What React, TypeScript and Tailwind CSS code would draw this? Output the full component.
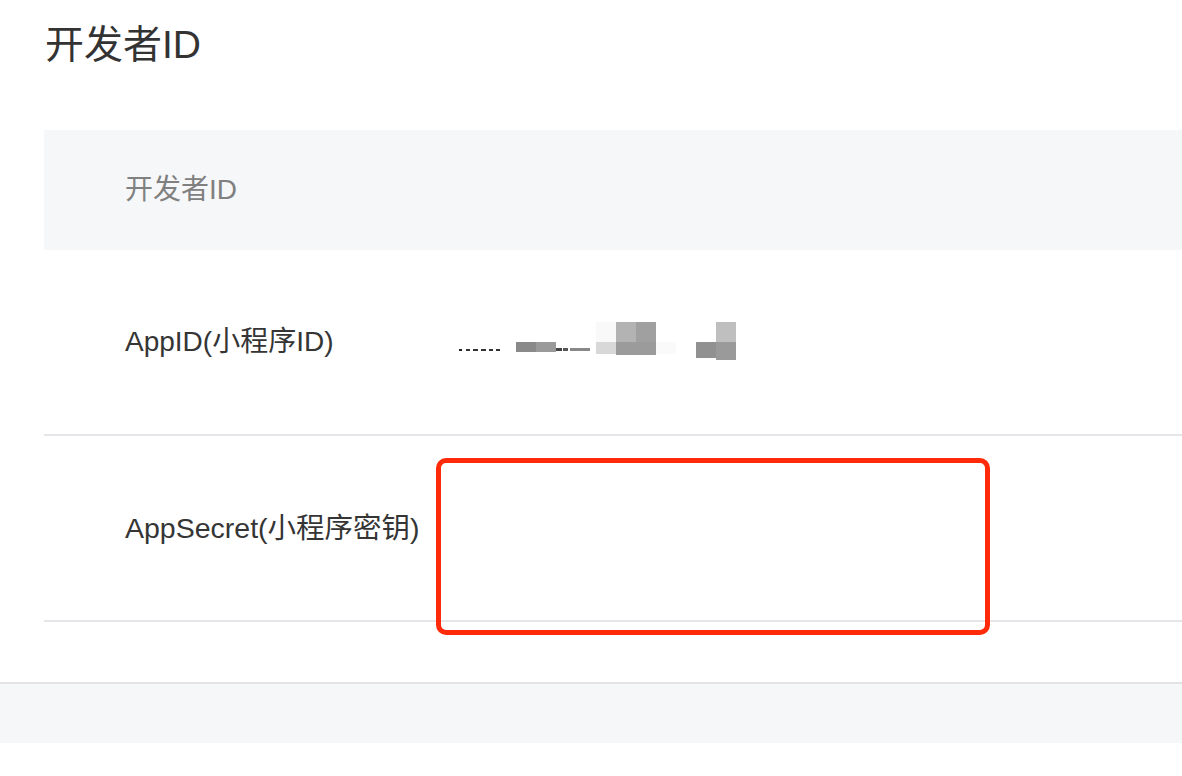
import React from "react";

const font = { fontFamily: '"Liberation Sans", "Noto Sans CJK SC", sans-serif' };

function Mosaic() {
  return (
    <svg width="300" height="50" viewBox="5 -1 300 50" className="block">
      {/* faint text fragments */}
      <rect x="9" y="31" width="3" height="2" fill="#222" />
      <rect x="16" y="31" width="4" height="2" fill="#333" />
      <rect x="23" y="31" width="5" height="2" fill="#333" />
      <rect x="31" y="31" width="5" height="2" fill="#333" />
      <rect x="39" y="31" width="4" height="2" fill="#333" />
      <rect x="46" y="31" width="4" height="2" fill="#333" />
      <rect x="106" y="30" width="6" height="3" fill="#444" />
      <rect x="113" y="30" width="5" height="3" fill="#555" />
      <rect x="120" y="30" width="20" height="3" fill="#888" />
      <rect x="66" y="24" width="20" height="10" fill="#8a8a8a" />
      <rect x="86" y="24" width="20" height="10" fill="#9a9a9a" />
      {/* middle mosaic */}
      <rect x="146" y="4" width="20" height="20" fill="#f9f9f9" />
      <rect x="166" y="4" width="20" height="20" fill="#b3b3b3" />
      <rect x="186" y="4" width="20" height="20" fill="#a0a0a0" />
      <rect x="146" y="24" width="20" height="12" fill="#d8d8d8" />
      <rect x="166" y="24" width="40" height="13" fill="#9b9b9b" />
      <rect x="206" y="24" width="20" height="12" fill="#fafafa" />
      {/* right mosaic */}
      <rect x="266" y="4" width="20" height="20" fill="#bfbfbf" />
      <rect x="246" y="24" width="20" height="16" fill="#919191" />
      <rect x="266" y="24" width="20" height="18" fill="#9a9a9a" />
    </svg>
  );
}

export default function App() {
  return (
    <div className="w-[1182px] h-[776px] bg-white overflow-hidden" style={font}>
      <div className="h-[130px] pl-[45px] pt-[22px]">
        <h1 className="text-[39px] leading-[46px] text-[#333333] font-normal">开发者ID</h1>
      </div>
      <div className="ml-[44px]">
        <div className="h-[120px] bg-[#f6f7f9] pl-[81px] flex items-center">
          <span className="text-[28px] text-[#808080]">开发者ID</span>
        </div>
        <div className="h-[186px] border-b-2 border-[#e6e6ea] flex items-center pl-[81px]">
          <span className="w-[330px] text-[28px] text-[#353535]">AppID(小程序ID)</span>
          <Mosaic />
        </div>
        <div className="relative h-[186px] border-b-2 border-[#e6e6ea] flex items-center pl-[81px]">
          <span className="w-[330px] text-[28.5px] text-[#353535] whitespace-nowrap">AppSecret(小程序密钥)</span>
          <div className="absolute left-[392px] top-[22px] w-[554px] h-[177px] border-[5px] border-[#ff2a0a] rounded-[10px]" />
        </div>
      </div>
      <div className="h-[60px]" />
      <div className="h-[61px] border-t-2 border-[#e3e3e6] bg-[#f6f7f9]" />
    </div>
  );
}
